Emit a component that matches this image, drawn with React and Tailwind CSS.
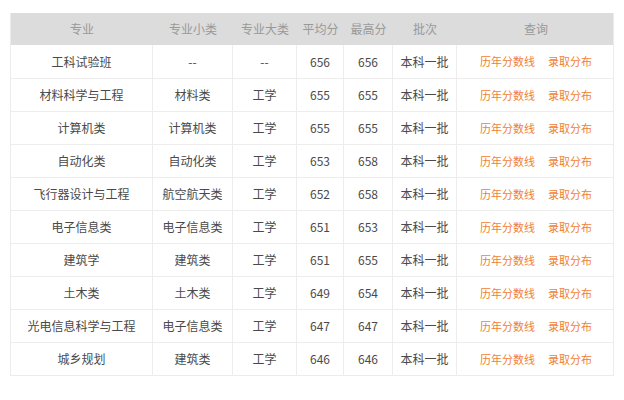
const COLS = 'grid grid-cols-[142px_80px_64px_47px_49px_64px_158px]'

const HEAD = ['专业', '专业小类', '专业大类', '平均分', '最高分', '批次', '查询']

const ROWS = [
  ['工科试验班', '--', '--', '656', '656'],
  ['材料科学与工程', '材料类', '工学', '655', '655'],
  ['计算机类', '计算机类', '工学', '655', '655'],
  ['自动化类', '自动化类', '工学', '653', '658'],
  ['飞行器设计与工程', '航空航天类', '工学', '652', '658'],
  ['电子信息类', '电子信息类', '工学', '651', '653'],
  ['建筑学', '建筑类', '工学', '651', '655'],
  ['土木类', '土木类', '工学', '649', '654'],
  ['光电信息科学与工程', '电子信息类', '工学', '647', '647'],
  ['城乡规划', '建筑类', '工学', '646', '646'],
]

export default function App() {
  return (
    <div className="w-[624px] h-[400px] bg-white pt-[13px] pl-[10px] text-[12px] font-['Noto_Sans_CJK_SC','Noto_Sans',sans-serif]">
      <div className="w-[604px] border-x border-b border-[#ececec]">
        {/* header */}
        <div className={`${COLS} h-[32px] bg-[#dcdcdc] text-[#999]`}>
          {HEAD.map(h => (
            <div key={h} className="flex items-center justify-center">{h}</div>
          ))}
        </div>
        {/* rows */}
        {ROWS.map((r, i) => (
          <div key={i} className={`${COLS} h-[33px] text-[#4a4a4a] ${i > 0 ? 'border-t border-[#ededed]' : ''}`}>
            {r.map((c, j) => (
              <div key={j} className="flex items-center justify-center border-r border-[#ededed]">{c}</div>
            ))}
            <div className="flex items-center justify-center border-r border-[#ededed]">本科一批</div>
            <div className="flex items-center justify-center gap-[13px] text-[11px] text-[#f07f33]">
              <span>历年分数线</span>
              <span>录取分布</span>
            </div>
          </div>
        ))}
      </div>
    </div>
  )
}
